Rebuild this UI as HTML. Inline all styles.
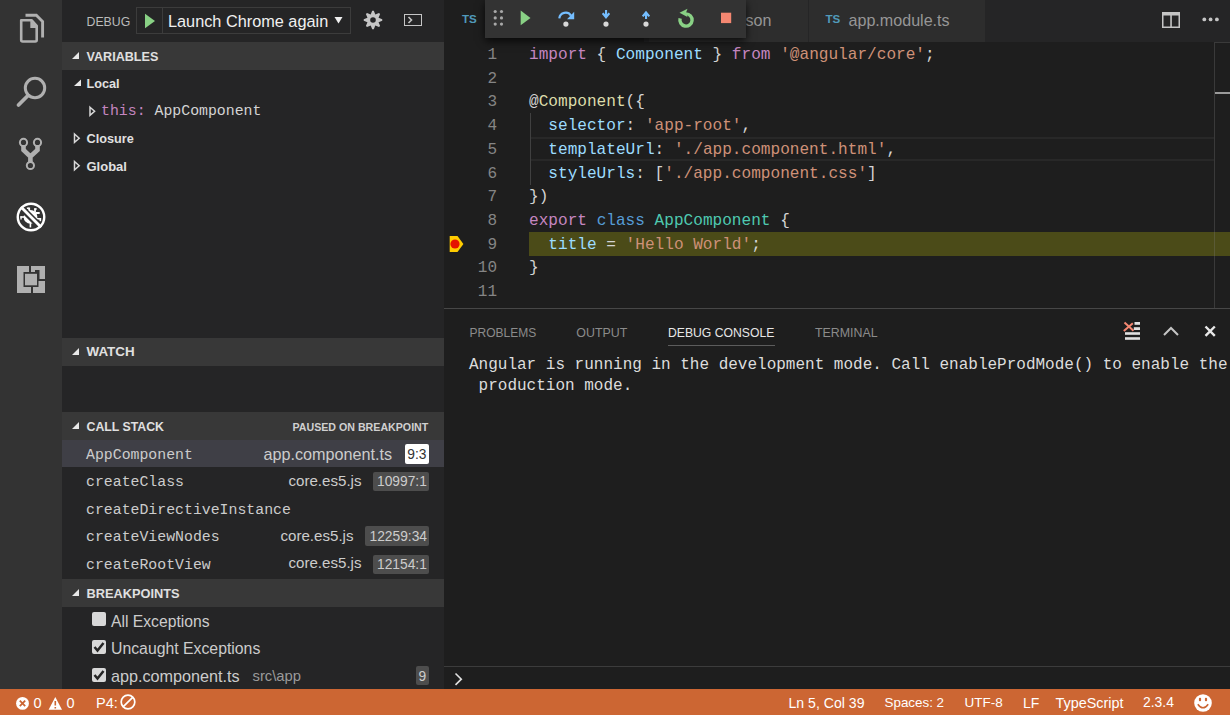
<!DOCTYPE html>
<html><head><meta charset="utf-8">
<style>
*{margin:0;padding:0;box-sizing:border-box}
html,body{width:1230px;height:715px;overflow:hidden;background:#1e1e1e;font-family:"Liberation Sans",sans-serif;color:#cccccc}
.a{position:absolute}
.t{position:absolute;white-space:pre;line-height:1}
.mono{font-family:"Liberation Mono",monospace}
svg{position:absolute;overflow:visible}
</style></head><body>

<!-- ACTIVITY BAR -->
<div class="a" style="left:0;top:0;width:62px;height:689px;background:#333333"></div>


<!-- activity icons -->
<svg style="left:0;top:0" width="1" height="1">
 <g fill="none" stroke="#b0b0b0" stroke-width="2.6">
  <path d="M25.5 15.2 L36.3 15.2 L42.6 21.5 L42.6 37.5" stroke-width="2.9"/>
  <path d="M21.2 20.2 L31.5 20.2 L36.7 25.8 L36.7 40 Q36.7 41.5 35.2 41.5 L22.7 41.5 Q21.2 41.5 21.2 40 Z" stroke-linejoin="round"/>
 </g>
 <path d="M30.3 20 L37.8 28 L30.3 28 Z" fill="#b0b0b0"/>
 <!-- search -->
 <circle cx="35" cy="88" r="9.7" fill="none" stroke="#b0b0b0" stroke-width="3"/>
 <path d="M28 95.5 L18.5 105" stroke="#b0b0b0" stroke-width="3.8" stroke-linecap="round"/>
 <!-- git -->
 <g fill="none" stroke="#b0b0b0">
  <circle cx="23.5" cy="142.4" r="3.6" stroke-width="2"/>
  <circle cx="37.5" cy="142.4" r="3.6" stroke-width="2"/>
  <circle cx="30.4" cy="165.5" r="3.6" stroke-width="2"/>
  <path d="M23.5 146 L23.5 150 L30.4 156.5 L30.4 162 M37.5 146 L37.5 150 L30.4 156.5" stroke-width="4.6" stroke-linejoin="miter"/>
 </g>
 <!-- debug (active) -->
 <defs><mask id="slashm" maskUnits="userSpaceOnUse" x="0" y="180" width="62" height="80"><rect x="0" y="180" width="62" height="80" fill="#fff"/><path d="M19 205.5 L43 229.5" stroke="#000" stroke-width="6.6"/></mask></defs>
 <circle cx="31" cy="217" r="13.25" fill="none" stroke="#ffffff" stroke-width="2.4"/>
 <g fill="#ffffff" mask="url(#slashm)">
  <circle cx="30.5" cy="216.9" r="6.9"/>
  <rect x="20.4" y="216.2" width="4.8" height="1.6"/>
  <rect x="20.4" y="216.2" width="1.3" height="3.3"/>
  <rect x="28.2" y="207.5" width="1.9" height="5"/>
  <rect x="26.8" y="207.5" width="2" height="1.5"/>
  <rect x="34.2" y="208.3" width="1.7" height="4"/>
  <rect x="34.2" y="208.3" width="2.6" height="1.4"/>
  <rect x="35.5" y="212" width="4.2" height="2"/>
  <rect x="36.5" y="218" width="4.6" height="1.6"/>
  <rect x="39.5" y="218" width="1.6" height="3.2"/>
  <rect x="29.6" y="222" width="1.6" height="5.4"/>
 </g>
 <path d="M21 207 L41.2 227.2" stroke="#ffffff" stroke-width="2.8"/>
 <!-- extensions -->
 <g fill="#b0b0b0">
  <path d="M17 266 L29 266 L29 272 L23.5 272 L23.5 287 L31 287 L31 293 L17 293 Z"/>
  <path d="M31 266 L45 266 L45 279 L39.5 279 L39.5 270 L35 270 L35 272 L31 272 Z"/>
  <path d="M33 281 L45 281 L45 293 L33 293 L33 287 L38.5 287 L38.5 281 Z"/>
  <rect x="25" y="273.8" width="12" height="11.5"/>
 </g>
</svg>

<!-- SIDEBAR -->
<div class="a" style="left:62px;top:0;width:382px;height:689px;background:#252526"></div>


<!-- sidebar title -->
<div class="t" style="left:86.5px;top:15.7px;font-size:12.3px;color:#bbbbbb">DEBUG</div>
<div class="a" style="left:136px;top:7px;width:215px;height:27px;border:1px solid #3c3c3c"></div>
<div class="a" style="left:162px;top:8px;width:1px;height:25px;background:#3c3c3c"></div>
<svg style="left:0;top:0" width="1" height="1"><path d="M145 13.7 L155 21 L145 28.3 Z" fill="#89d185"/></svg>
<div class="t" style="left:168px;top:13px;font-size:16.3px;color:#f0f0f0">Launch Chrome again</div>
<svg style="left:0;top:0" width="1" height="1"><path d="M334.5 17 L342.5 17 L338.5 23.5 Z" fill="#f0f0f0"/></svg>
<!-- gear -->
<svg style="left:364px;top:11px" width="18" height="18" viewBox="0 0 18 18">
<path fill="#c5c5c5" fill-rule="evenodd" d="M6.70 3.46 L8.19 -0.26 L9.81 -0.26 L11.30 3.46 L11.30 3.46 L14.98 1.88 L16.12 3.02 L14.54 6.70 L14.54 6.70 L18.26 8.19 L18.26 9.81 L14.54 11.30 L14.54 11.30 L16.12 14.98 L14.98 16.12 L11.30 14.54 L11.30 14.54 L9.81 18.26 L8.19 18.26 L6.70 14.54 L6.70 14.54 L3.02 16.12 L1.88 14.98 L3.46 11.30 L3.46 11.30 L-0.26 9.81 L-0.26 8.19 L3.46 6.70 L3.46 6.70 L1.88 3.02 L3.02 1.88 L6.70 3.46 Z M9 6.2 A2.8 2.8 0 1 0 9 11.8 A2.8 2.8 0 1 0 9 6.2 Z"/>
</svg>
<!-- terminal icon -->
<div class="a" style="left:404px;top:14px;width:18px;height:12px;border:1.8px solid #c5c5c5"></div>
<svg style="left:0;top:0" width="1" height="1"><path d="M408.5 17 L411.5 20 L408.5 23" stroke="#c5c5c5" stroke-width="1.6" fill="none"/></svg>

<!-- VARIABLES -->
<div class="a" style="left:62px;top:42px;width:382px;height:27.5px;background:#383838"></div>
<svg style="left:0;top:0" width="1" height="1"><path d="M79 52 L79 59 L72 59 Z" fill="#e8e8e8"/></svg>
<div class="t" style="left:86.5px;top:50.5px;font-size:12.6px;font-weight:bold;color:#e0e0e0">VARIABLES</div>

<svg style="left:0;top:0" width="1" height="1"><path d="M81 79.5 L81 86 L74 86 Z" fill="#e8e8e8"/></svg>
<div class="t" style="left:86.5px;top:78px;font-size:12.7px;font-weight:bold;color:#e0e0e0">Local</div>

<svg style="left:0;top:0" width="1" height="1"><path d="M90 107.2 L94.6 111.3 L90 115.4 Z" fill="none" stroke="#d8d8d8" stroke-width="1.5"/></svg>
<div class="t mono" style="left:101px;top:103.5px;font-size:14.85px;color:#c586c0">this:</div>
<div class="t mono" style="left:154.5px;top:103.5px;font-size:14.85px;color:#d4d4d4">AppComponent</div>

<svg style="left:0;top:0" width="1" height="1"><path d="M74.5 134 L79.2 138.2 L74.5 142.4 Z" fill="none" stroke="#d8d8d8" stroke-width="1.5"/></svg>
<div class="t" style="left:86.5px;top:132.5px;font-size:12.7px;font-weight:bold;color:#e0e0e0">Closure</div>
<svg style="left:0;top:0" width="1" height="1"><path d="M74.5 161.5 L79.2 165.7 L74.5 169.9 Z" fill="none" stroke="#d8d8d8" stroke-width="1.5"/></svg>
<div class="t" style="left:86.5px;top:160px;font-size:13px;font-weight:bold;color:#e0e0e0">Global</div>

<!-- WATCH -->
<div class="a" style="left:62px;top:338px;width:382px;height:27.5px;background:#383838"></div>
<svg style="left:0;top:0" width="1" height="1"><path d="M79 348 L79 355 L72 355 Z" fill="#e8e8e8"/></svg>
<div class="t" style="left:86.5px;top:345px;font-size:13.4px;font-weight:bold;color:#e0e0e0">WATCH</div>

<!-- CALL STACK -->
<div class="a" style="left:62px;top:412px;width:382px;height:27.5px;background:#383838"></div>
<svg style="left:0;top:0" width="1" height="1"><path d="M79 422 L79 429 L72 429 Z" fill="#e8e8e8"/></svg>
<div class="t" style="left:86.5px;top:420.5px;font-size:12.3px;font-weight:bold;color:#e0e0e0">CALL STACK</div>
<div class="t" style="left:292.5px;top:421.5px;font-size:10.65px;font-weight:bold;color:#d0d0d0">PAUSED ON BREAKPOINT</div>

<div class="a" style="left:62px;top:440px;width:382px;height:27px;background:#3f3f46"></div>
<div class="t mono" style="left:86px;top:447.5px;font-size:14.85px;color:#cccccc">AppComponent</div>
<div class="t" style="left:263.5px;top:446px;font-size:16.2px;color:#cccccc">app.component.ts</div>
<div class="a" style="left:405px;top:444px;width:24px;height:19.5px;background:#ffffff;border-radius:2px"></div>
<div class="t" style="left:407.3px;top:447.5px;font-size:13.8px;color:#333333">9:3</div>

<div class="t mono" style="left:86px;top:475px;font-size:14.85px;color:#cccccc">createClass</div>
<div class="t" style="left:288.5px;top:472.5px;font-size:15.1px;color:#cccccc">core.es5.js</div>
<div class="a" style="left:373px;top:471.5px;width:56px;height:19px;background:#4d4d4d;border-radius:2px"></div>
<div class="t" style="left:377px;top:475px;font-size:13.8px;color:#cccccc">10997:1</div>

<div class="t mono" style="left:86px;top:502.5px;font-size:14.85px;color:#cccccc">createDirectiveInstance</div>

<div class="t mono" style="left:86px;top:530px;font-size:14.85px;color:#cccccc">createViewNodes</div>
<div class="t" style="left:280.5px;top:527.5px;font-size:15.1px;color:#cccccc">core.es5.js</div>
<div class="a" style="left:365px;top:526px;width:64px;height:19.5px;background:#4d4d4d;border-radius:2px"></div>
<div class="t" style="left:369.5px;top:530px;font-size:13.8px;color:#cccccc">12259:34</div>

<div class="t mono" style="left:86px;top:557.5px;font-size:14.85px;color:#cccccc">createRootView</div>
<div class="t" style="left:288.5px;top:555px;font-size:15.1px;color:#cccccc">core.es5.js</div>
<div class="a" style="left:373px;top:554.5px;width:56px;height:19px;background:#4d4d4d;border-radius:2px"></div>
<div class="t" style="left:377px;top:558px;font-size:13.8px;color:#cccccc">12154:1</div>

<!-- BREAKPOINTS -->
<div class="a" style="left:62px;top:579px;width:382px;height:28px;background:#383838"></div>
<svg style="left:0;top:0" width="1" height="1"><path d="M79 589 L79 596 L72 596 Z" fill="#e8e8e8"/></svg>
<div class="t" style="left:86.5px;top:587.5px;font-size:12.8px;font-weight:bold;color:#e0e0e0">BREAKPOINTS</div>

<div class="a" style="left:92px;top:612px;width:14px;height:14px;background:#d8d8d8;border-radius:2px"></div>
<div class="t" style="left:111px;top:614px;font-size:15.7px;color:#cccccc">All Exceptions</div>
<div class="a" style="left:92px;top:640px;width:14px;height:14px;background:#d8d8d8;border-radius:2px"></div>
<svg style="left:0;top:0" width="1" height="1"><path d="M94.5 647 L97.5 650.5 L103.5 643" stroke="#252525" stroke-width="2.5" fill="none"/></svg>
<div class="t" style="left:111px;top:641px;font-size:15.8px;color:#cccccc">Uncaught Exceptions</div>
<div class="a" style="left:92px;top:668px;width:14px;height:14px;background:#d8d8d8;border-radius:2px"></div>
<svg style="left:0;top:0" width="1" height="1"><path d="M94.5 675 L97.5 678.5 L103.5 671" stroke="#252525" stroke-width="2.5" fill="none"/></svg>
<div class="t" style="left:111px;top:668px;font-size:16.2px;color:#cccccc">app.component.ts</div>
<div class="t" style="left:252.5px;top:668.5px;font-size:14.8px;color:#9a9a9a">src\app</div>
<div class="a" style="left:416px;top:666px;width:13px;height:18.5px;background:#4d4d4d;border-radius:2px"></div>
<div class="t" style="left:418.5px;top:669.5px;font-size:13.8px;color:#cccccc">9</div>

<!-- EDITOR TABS -->
<div class="a" style="left:444px;top:0;width:786px;height:42px;background:#252526"></div>

<!-- tabs -->
<div class="a" style="left:444px;top:0;width:200px;height:42px;background:#1e1e1e"></div>
<div class="a" style="left:649px;top:0;width:159px;height:42px;background:#2d2d2d"></div>
<div class="a" style="left:809px;top:0;width:176px;height:42px;background:#2d2d2d"></div>
<div class="t" style="left:462px;top:13px;font-size:11.6px;font-weight:bold;color:#519aba">TS</div>
<div class="t" style="left:485px;top:11.5px;font-size:16.1px;color:#ffffff">app.component.ts</div>
<div class="t" style="left:682px;top:11.5px;font-size:16.1px;color:#969696">tsconfig.json</div>
<div class="t" style="left:825.5px;top:13px;font-size:11.6px;font-weight:bold;color:#519aba">TS</div>
<div class="t" style="left:848.5px;top:11.5px;font-size:16.1px;color:#969696">app.module.ts</div>
<!-- split / more -->
<svg style="left:0;top:0" width="1" height="1">
 <rect x="1162.75" y="12.75" width="16.5" height="14.5" fill="none" stroke="#c5c5c5" stroke-width="1.5"/>
 <rect x="1162" y="12" width="18" height="3.5" fill="#c5c5c5"/>
 <rect x="1170.25" y="14" width="1.6" height="13" fill="#c5c5c5"/>
 <circle cx="1204.3" cy="19.4" r="1.9" fill="#c5c5c5"/>
 <circle cx="1210.6" cy="19.4" r="1.9" fill="#c5c5c5"/>
 <circle cx="1216.9" cy="19.4" r="1.9" fill="#c5c5c5"/>
</svg>

<!-- editor body -->
<div class="a" style="left:444px;top:42px;width:786px;height:266px;background:#1e1e1e"></div>
<!-- current line border (line 5) -->
<div class="a" style="left:530.5px;top:137px;width:683.5px;height:24px;border-top:2px solid #282828;border-bottom:2px solid #282828"></div>
<!-- indent guide -->
<div class="a" style="left:530px;top:113px;width:1px;height:71.5px;background:#404040"></div>
<!-- stack frame highlight line 9 -->
<div class="a" style="left:529px;top:232px;width:701px;height:24px;background:#4b4b18"></div>
<!-- breakpoint -->
<svg style="left:0;top:0" width="1" height="1">
 <path d="M449.7 236 L457.5 236 L463.4 244 L457.5 252 L449.7 252 Z" fill="#ffcc00"/>
 <circle cx="455" cy="244" r="4.6" fill="#e51400"/>
</svg>
<!-- overview ruler -->
<div class="a" style="left:1214px;top:42px;width:1px;height:266px;background:rgba(127,127,127,0.3)"></div>
<div class="a" style="left:1215px;top:92px;width:15px;height:2px;background:#9a9a9a"></div>
<div class="a" style="left:1214px;top:42px;width:16px;height:1px;background:#3a3a3a"></div>

<div class="mono" style="position:absolute;left:444px;top:44px;width:53px;font-size:16px;line-height:23.7px;color:#858585;text-align:right;white-space:pre">1
2
3
4
5
6
7
8
9
10
11</div>
<div class="mono" style="position:absolute;left:529px;top:44px;font-size:16.1px;line-height:23.7px;color:#d4d4d4;white-space:pre"><span style="color:#c586c0">import</span> { <span style="color:#9cdcfe">Component</span> } <span style="color:#c586c0">from</span> <span style="color:#ce9178">'@angular/core'</span>;

@<span style="color:#dcdcaa">Component</span>({
  <span style="color:#9cdcfe">selector</span>: <span style="color:#ce9178">'app-root'</span>,
  <span style="color:#9cdcfe">templateUrl</span>: <span style="color:#ce9178">'./app.component.html'</span>,
  <span style="color:#9cdcfe">styleUrls</span>: [<span style="color:#ce9178">'./app.component.css'</span>]
})
<span style="color:#c586c0">export</span> <span style="color:#569cd6">class</span> <span style="color:#4ec9b0">AppComponent</span> {
  <span style="color:#9cdcfe">title</span> = <span style="color:#ce9178">'Hello World'</span>;
}
</div>

<!-- debug toolbar -->
<div class="a" style="left:485px;top:0;width:261px;height:37.5px;background:#333333;box-shadow:0 3px 8px rgba(0,0,0,0.75)"></div>
<svg style="left:0;top:0" width="1" height="1">
 <g fill="#a8a8a8">
  <circle cx="495.2" cy="11.5" r="1.6"/><circle cx="501.5" cy="11.5" r="1.6"/>
  <circle cx="495.2" cy="17.9" r="1.6"/><circle cx="501.5" cy="17.9" r="1.6"/>
  <circle cx="495.2" cy="24.1" r="1.6"/><circle cx="501.5" cy="24.1" r="1.6"/>
 </g>
 <path d="M520.7 10.6 L530.5 17.9 L520.7 25.2 Z" fill="#89d185"/>
 <!-- step over -->
 <path d="M559.3 18.3 A6.4 6.4 0 0 1 571 15.6" fill="none" stroke="#75beff" stroke-width="2.2"/>
 <path d="M574.2 11.8 L574.2 19.2 L567 19.2 Z" fill="#75beff"/>
 <circle cx="565.9" cy="24.1" r="2.6" fill="#d8d8d8"/>
 <!-- step into -->
 <rect x="605" y="10" width="2.1" height="6" fill="#75beff"/>
 <path d="M601.9 14 L603.4 12.6 L606 15.3 L608.6 12.6 L610.1 14 L606 19 Z" fill="#75beff"/>
 <circle cx="606" cy="24.1" r="2.6" fill="#d8d8d8"/>
 <!-- step out -->
 <rect x="645" y="13" width="2.1" height="6" fill="#75beff"/>
 <path d="M641.9 15.7 L643.4 17.1 L646 14.4 L648.6 17.1 L650.1 15.7 L646 10.7 Z" fill="#75beff"/>
 <circle cx="646" cy="24.1" r="2.6" fill="#d8d8d8"/>
 <!-- restart -->
 <path d="M686 13.9 A6.1 6.1 0 1 1 680.1 18.4" fill="none" stroke="#89d185" stroke-width="3.4"/>
 <path d="M679.5 12.8 L687.5 8.8 L686 12.8 L687.5 17 Z" fill="#89d185"/>
 <!-- stop -->
 <rect x="721" y="12.7" width="10.2" height="10.4" fill="#f48771"/>
</svg>

<!-- PANEL -->
<div class="a" style="left:444px;top:308px;width:786px;height:381px;background:#1e1e1e;border-top:1px solid #474747"></div>
<div class="t" style="left:469.5px;top:326.7px;font-size:12px;color:#8b8b8b">PROBLEMS</div>
<div class="t" style="left:576.3px;top:326.7px;font-size:12.4px;color:#8b8b8b">OUTPUT</div>
<div class="t" style="left:668px;top:326.7px;font-size:12.2px;color:#e7e7e7">DEBUG CONSOLE</div>
<div class="a" style="left:668px;top:345px;width:107px;height:1px;background:#5c5c5c"></div>
<div class="t" style="left:815px;top:326.7px;font-size:12.4px;color:#8b8b8b">TERMINAL</div>
<svg style="left:0;top:0" width="1" height="1">
 <g fill="#e0e0e0">
  <rect x="1134.5" y="322" width="5.5" height="2.8"/>
  <rect x="1133.8" y="327.2" width="6.2" height="2.8"/>
  <rect x="1125" y="332.2" width="15" height="2.6"/>
  <rect x="1125" y="337.2" width="15" height="2.6"/>
 </g>
 <path d="M1124.5 322.5 L1133.5 330.8 M1132.8 323.2 L1123.8 331" stroke="#f48771" stroke-width="2"/>
 <path d="M1164 335 L1171 328 L1178 335" fill="none" stroke="#c5c5c5" stroke-width="2"/>
 <path d="M1205.5 326.5 L1214.8 335.8 M1214.8 326.5 L1205.5 335.8" stroke="#e8e8e8" stroke-width="2.4"/>
</svg>
<div class="mono" style="position:absolute;left:469px;top:354.5px;font-size:16px;line-height:21.9px;color:#dcdcdc;white-space:pre">Angular is running in the development mode. Call enableProdMode() to enable the
 production mode.</div>
<!-- repl input -->
<div class="a" style="left:444px;top:666px;width:786px;height:1px;background:#3c3c3c"></div>
<svg style="left:0;top:0" width="1" height="1"><path d="M455.5 673.5 L461.3 679.2 L455.5 684.8" fill="none" stroke="#e0e0e0" stroke-width="1.6"/></svg>


<!-- STATUS BAR -->
<div class="a" style="left:0;top:689px;width:1230px;height:26px;background:#cc6633"></div>

<svg style="left:0;top:0" width="1" height="1">
 <circle cx="22.5" cy="703.4" r="6.4" fill="#ffffff"/>
 <path d="M19.8 700.7 L25.2 706.1 M25.2 700.7 L19.8 706.1" stroke="#cc6633" stroke-width="1.8"/>
 <path d="M55.3 697 L62 709.8 L48.6 709.8 Z" fill="#ffffff"/>
 <path d="M55.3 701 L55.3 705.5 M55.3 707 L55.3 708.5" stroke="#cc6633" stroke-width="1.6"/>
 <circle cx="128" cy="702" r="6.8" fill="none" stroke="#ffffff" stroke-width="1.7"/>
 <path d="M123.3 706.7 L132.7 697.3" stroke="#ffffff" stroke-width="1.7"/>
 <circle cx="1203" cy="703" r="8.8" fill="#ffffff"/>
 <rect x="1198.9" y="697.8" width="2.2" height="3.4" rx="1" fill="#cc6633"/>
 <rect x="1204.9" y="697.8" width="2.2" height="3.4" rx="1" fill="#cc6633"/>
 <path d="M1197.8 704.2 Q1203 711.5 1208.2 704.2" fill="none" stroke="#cc6633" stroke-width="1.5"/>
</svg>
<div class="t" style="left:33.5px;top:695.5px;font-size:14.5px;color:#ffffff">0</div>
<div class="t" style="left:66.5px;top:695.5px;font-size:14.5px;color:#ffffff">0</div>
<div class="t" style="left:96px;top:695.5px;font-size:14.5px;color:#ffffff">P4:</div>
<div class="t" style="left:788.5px;top:695.5px;font-size:14.1px;color:#ffffff">Ln 5, Col 39</div>
<div class="t" style="left:884.5px;top:695.5px;font-size:13.4px;color:#ffffff">Spaces: 2</div>
<div class="t" style="left:964.5px;top:695.5px;font-size:13.5px;color:#ffffff">UTF-8</div>
<div class="t" style="left:1023px;top:695.5px;font-size:14px;color:#ffffff">LF</div>
<div class="t" style="left:1055.5px;top:695.5px;font-size:14.4px;color:#ffffff">TypeScript</div>
<div class="t" style="left:1143px;top:695.5px;font-size:13.9px;color:#ffffff">2.3.4</div>


</body></html>
